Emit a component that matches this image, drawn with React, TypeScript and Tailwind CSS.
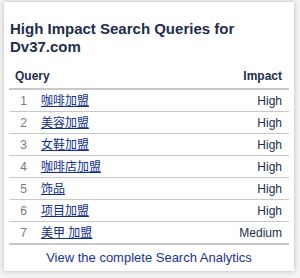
const rows = [
  { n: 1, q: '咖啡加盟', impact: 'High' },
  { n: 2, q: '美容加盟', impact: 'High' },
  { n: 3, q: '女鞋加盟', impact: 'High' },
  { n: 4, q: '咖啡店加盟', impact: 'High' },
  { n: 5, q: '饰品', impact: 'High' },
  { n: 6, q: '项目加盟', impact: 'High' },
  { n: 7, q: '美甲 加盟', impact: 'Medium' },
];

export default function App() {
  return (
    <div
      className="h-[278px] w-[300px] overflow-hidden bg-[#f4f4f4] pl-[4px] pt-[2px]"
      style={{ fontFamily: '"Liberation Sans", Arial, "Noto Sans CJK SC", sans-serif' }}
    >
      <div className="flex h-[269px] w-[290px] flex-col bg-white shadow-[0_0_5px_rgba(0,0,0,0.25)]">
        {/* Title */}
        <h1 className="ml-[6px] mt-[18px] text-[15px] font-bold leading-[18px] text-[#222d4d]">
          High Impact Search Queries for
          <br />
          Dv37.com
        </h1>

        {/* Table */}
        <div className="ml-[5px] mt-[13px] w-[280px]">
          <div className="flex items-center justify-between border-b-2 border-[#c8c8c8] px-[6px] pb-[5px] pr-[7px] text-[12px] font-bold leading-[14px] text-[#222d4d]">
            <span>Query</span>
            <span>Impact</span>
          </div>
          {rows.map((r, i) => (
            <div
              key={r.n}
              className={`flex items-center pr-[7px] text-[12px] ${
                i === rows.length - 1 ? 'h-[23px] border-b-2 border-[#c8c8c8]' : 'h-[22px] border-b border-[#c8c8c8]'
              }`}
            >
              <span className="w-[18px] text-right text-[#7a7a7a]">{r.n}</span>
              <a href="#" className="ml-[14px] text-[#10308f] underline">
                {r.q}
              </a>
              <span className="ml-auto text-[#222d4d]">{r.impact}</span>
            </div>
          ))}
        </div>

        {/* Footer link */}
        <a href="#" className="mt-[5px] block text-center text-[13px] leading-[15px] text-[#1a3399]">
          View the complete Search Analytics
        </a>
      </div>
    </div>
  );
}
